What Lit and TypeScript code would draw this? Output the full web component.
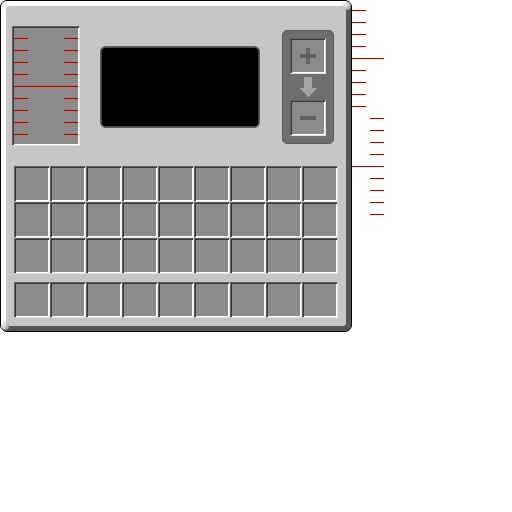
import { LitElement, html, css } from "lit";
import { customElement } from "lit/decorators.js";
import { classMap } from "lit/directives/class-map.js";

const steps = [0, 1, 2, 3, 4, 5, 6, 7, 8];
const columns = [0, 1, 2, 3, 4, 5, 6, 7, 8];

@customElement("app-root")
export class AppRoot extends LitElement {
  static styles = css`
    :host {
      display: block;
      min-height: 100vh;
      background: #fff;
      --face: #c6c6c6;
      --well: #8b8b8b;
      --mark: #8b1100;
      font-family: "Liberation Sans", sans-serif;
    }
    * {
      box-sizing: border-box;
    }
    .page {
      display: flex;
      align-items: flex-start;
    }
    .frame {
      position: relative;
      flex: none;
      border: 1px solid #000;
      border-radius: 7px;
      background: #555;
    }
    .bevel {
      border: 5px solid;
      border-color: #fff #555 #555 #fff;
      border-radius: 6px;
    }
    .face {
      background: var(--face);
      border-radius: 3px;
      padding: 20px 8px 8px;
    }
    .bevel {
      background: linear-gradient(135deg, #fff 50%, #555 50%);
    }
    .corner {
      position: absolute;
      width: 8px;
      height: 8px;
      border-radius: 4px;
      background: radial-gradient(circle at 30% 30%, #eee, #c6c6c6 45%, #777);
    }
    .corner.ne {
      top: 1px;
      right: 0;
    }
    .corner.sw {
      bottom: 1px;
      left: 0;
    }
    .top {
      display: flex;
      align-items: center;
      min-height: 122px;
      margin: 0 4px 18px -2px;
    }
    .sunk {
      display: block;
      padding: 0;
      border: 1px solid;
      border-color: #636363 #e3e3e3 #e3e3e3 #636363;
      border-radius: 0;
      background: var(--well);
      box-shadow: inset 1px 1px #373737, inset -1px -1px #fff;
    }
    .tank {
      align-self: flex-start;
      width: 68px;
      height: 120px;
      padding: 11px 1px;
    }
    .mark {
      display: flex;
      justify-content: space-between;
      height: 1px;
      margin-bottom: 11px;
    }
    .mark::before,
    .mark::after {
      content: "";
      width: 14px;
      background: var(--mark);
    }
    .mark.major {
      background: var(--mark);
    }
    .screen {
      width: 160px;
      height: 82px;
      margin-left: 20px;
      border: 1px solid #5f5f5f;
      border-radius: 6px;
      background: #000;
      box-shadow: inset 0 0 0 1px #4a4a4a;
    }
    .controls {
      display: flex;
      flex-direction: column;
      align-items: center;
      justify-content: space-between;
      width: 52px;
      height: 114px;
      margin-left: auto;
      padding: 7px;
      border: 1px solid #5a5a5a;
      border-radius: 5px;
      background: #6e6e6e;
    }
    .slot {
      width: 36px;
      height: 36px;
    }
    button.slot {
      display: grid;
      place-items: center;
      color: #636363;
      cursor: pointer;
    }
    svg {
      display: block;
      fill: currentColor;
      shape-rendering: crispEdges;
    }
    .arrow {
      color: #a3a3a3;
    }
    .grid {
      display: grid;
      grid-template-columns: repeat(9, 36px);
    }
    .grid + .grid {
      margin-top: 8px;
    }
    .scales {
      width: 32px;
      padding-top: 10px;
    }
    .scales .mark::before {
      width: 14px;
    }
    .scales .mark::after {
      display: none;
    }
    .scales .right .mark {
      justify-content: flex-end;
    }
  `;

  private marks() {
    return steps.map(
      (i) => html`<div class=${classMap({ mark: true, major: i === 4 })}></div>`
    );
  }

  private slots(rows: number) {
    return Array.from({ length: rows }, () =>
      columns.map(() => html`<div class="sunk slot"></div>`)
    );
  }

  render() {
    return html`
      <div class="page">
        <main class="frame">
          <div class="bevel">
            <div class="face">
              <div class="top">
                <div class="sunk tank">${this.marks()}</div>
                <div class="screen"></div>
                <div class="controls">
                  <button class="sunk slot" type="button" aria-label="Increase">
                    <svg width="16" height="16" viewBox="0 0 16 16">
                      <path d="M6 0h4v6h6v4h-6v6H6v-6H0V6h6z" />
                    </svg>
                  </button>
                  <svg class="arrow" width="18" height="20" viewBox="0 0 18 20">
                    <path d="M5 0h8v11h5L9 20 0 11h5z" />
                  </svg>
                  <button class="sunk slot" type="button" aria-label="Decrease">
                    <svg width="16" height="16" viewBox="0 0 16 16">
                      <path d="M0 6h16v4H0z" />
                    </svg>
                  </button>
                </div>
              </div>
              <div class="grid">${this.slots(3)}</div>
              <div class="grid">${this.slots(1)}</div>
            </div>
          </div>
          <span class="corner ne"></span>
          <span class="corner sw"></span>
        </main>
        <div class="scales">
          <div class="left">${this.marks()}</div>
          <div class="right">${this.marks()}</div>
        </div>
      </div>
    `;
  }
}
